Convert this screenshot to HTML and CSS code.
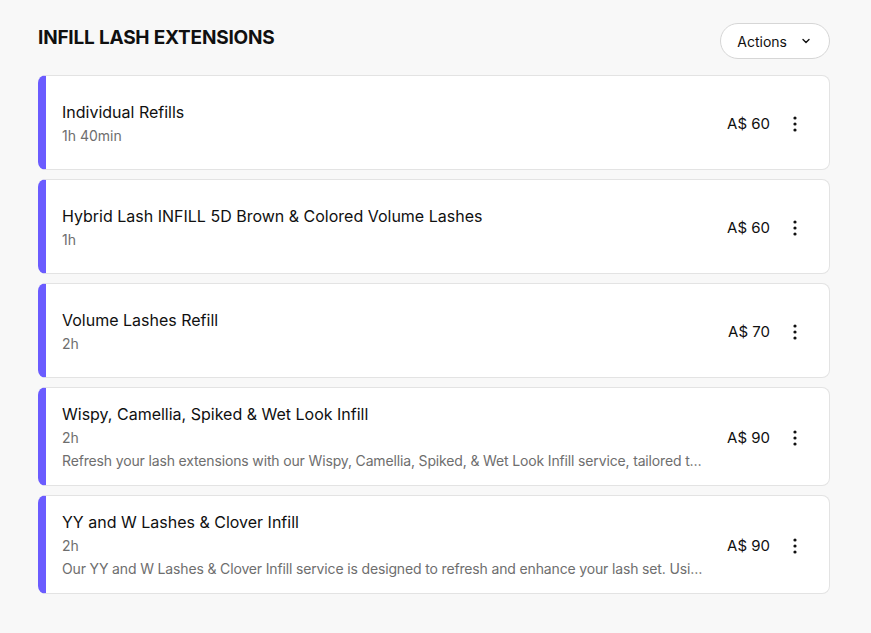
FILE: index.html
```html
<!DOCTYPE html>
<html lang="en">
<head>
    <meta charset="UTF-8">
    <meta name="viewport" content="width=device-width, initial-scale=1.0">
    <title>Infill Lash Extensions</title>
    <link rel="stylesheet" href="styles.css">
</head>
<body>
    <div class="category">
        <div class="category-header">
            <h2>INFILL LASH EXTENSIONS</h2>
            <button class="actions-btn">
                Actions
                <svg width="12" height="12" viewBox="0 0 12 12"><path d="M3 4.5l3 3 3-3" fill="none" stroke="#111" stroke-width="1.4" stroke-linecap="round" stroke-linejoin="round"/></svg>
            </button>
        </div>

        <div class="service-list">
            <div class="service">
                <div class="service-info">
                    <div class="service-name">Individual Refills</div>
                    <div class="service-meta">1h 40min</div>
                </div>
                <div class="service-price">A$ 60</div>
                <button class="more-btn" aria-label="More">
                    <svg width="4" height="16" viewBox="0 0 4 16"><circle cx="2" cy="2" r="1.6"/><circle cx="2" cy="8" r="1.6"/><circle cx="2" cy="14" r="1.6"/></svg>
                </button>
            </div>

            <div class="service">
                <div class="service-info">
                    <div class="service-name">Hybrid Lash INFILL 5D Brown &amp; Colored Volume Lashes</div>
                    <div class="service-meta">1h</div>
                </div>
                <div class="service-price">A$ 60</div>
                <button class="more-btn" aria-label="More">
                    <svg width="4" height="16" viewBox="0 0 4 16"><circle cx="2" cy="2" r="1.6"/><circle cx="2" cy="8" r="1.6"/><circle cx="2" cy="14" r="1.6"/></svg>
                </button>
            </div>

            <div class="service">
                <div class="service-info">
                    <div class="service-name">Volume Lashes Refill</div>
                    <div class="service-meta">2h</div>
                </div>
                <div class="service-price">A$ 70</div>
                <button class="more-btn" aria-label="More">
                    <svg width="4" height="16" viewBox="0 0 4 16"><circle cx="2" cy="2" r="1.6"/><circle cx="2" cy="8" r="1.6"/><circle cx="2" cy="14" r="1.6"/></svg>
                </button>
            </div>

            <div class="service">
                <div class="service-info">
                    <div class="service-name">Wispy, Camellia, Spiked &amp; Wet Look Infill</div>
                    <div class="service-meta">2h</div>
                    <div class="service-desc">Refresh your lash extensions with our Wispy, Camellia, Spiked, &amp; Wet Look Infill service, tailored to maintain the fullness and texture of your lashes.</div>
                </div>
                <div class="service-price">A$ 90</div>
                <button class="more-btn" aria-label="More">
                    <svg width="4" height="16" viewBox="0 0 4 16"><circle cx="2" cy="2" r="1.6"/><circle cx="2" cy="8" r="1.6"/><circle cx="2" cy="14" r="1.6"/></svg>
                </button>
            </div>

            <div class="service">
                <div class="service-info">
                    <div class="service-name">YY and W Lashes &amp; Clover Infill</div>
                    <div class="service-meta">2h</div>
                    <div class="service-desc">Our YY and W Lashes &amp; Clover Infill service is designed to refresh and enhance your lash set. Using premium fans for a soft finish.</div>
                </div>
                <div class="service-price">A$ 90</div>
                <button class="more-btn" aria-label="More">
                    <svg width="4" height="16" viewBox="0 0 4 16"><circle cx="2" cy="2" r="1.6"/><circle cx="2" cy="8" r="1.6"/><circle cx="2" cy="14" r="1.6"/></svg>
                </button>
            </div>
        </div>
    </div>
</body>
</html>
```

FILE: styles.css
```css
* {
    margin: 0;
    padding: 0;
    box-sizing: border-box;
}

body {
    font-family: 'Inter', 'Liberation Sans', sans-serif;
    background: #f8f8f8;
    color: #101010;
    padding: 23px 41px 0 38px;
}

.category-header {
    display: flex;
    justify-content: space-between;
    align-items: center;
    margin-bottom: 16px;
}

h2 {
    font-size: 19px;
    font-weight: 700;
    letter-spacing: -0.2px;
    margin-top: -7px;
}

.actions-btn {
    display: flex;
    align-items: center;
    gap: 13px;
    height: 36px;
    padding: 0 17px 0 16px;
    background: #fff;
    border: 1px solid #d6d6d6;
    border-radius: 18px;
    font-family: inherit;
    font-size: 14px;
    font-weight: 400;
    color: #101010;
}

.service-list {
    display: flex;
    flex-direction: column;
    gap: 9px;
}

.service {
    display: flex;
    align-items: center;
    min-height: 95px;
    background: #fff;
    border: 1px solid #e3e3e3;
    border-left: 8px solid #6b5cff;
    border-radius: 8px;
    padding: 15px 26px 13px 16px;
}

.service-info {
    flex: 1;
    min-width: 0;
}

.service-name {
    font-size: 16px;
    font-weight: 400;
    line-height: 23px;
}

.service-meta,
.service-desc {
    font-size: 14px;
    line-height: 23px;
    color: #6e6e6e;
}

.service-desc {
    white-space: nowrap;
    overflow: hidden;
    text-overflow: ellipsis;
    max-width: 660px;
    letter-spacing: -0.15px;
}

.service-price {
    font-size: 15px;
    font-weight: 400;
    margin-left: 24px;
}

.more-btn {
    display: flex;
    align-items: center;
    justify-content: center;
    width: 16px;
    height: 24px;
    margin-left: 17px;
    background: none;
    border: none;
    fill: #101010;
}
```
